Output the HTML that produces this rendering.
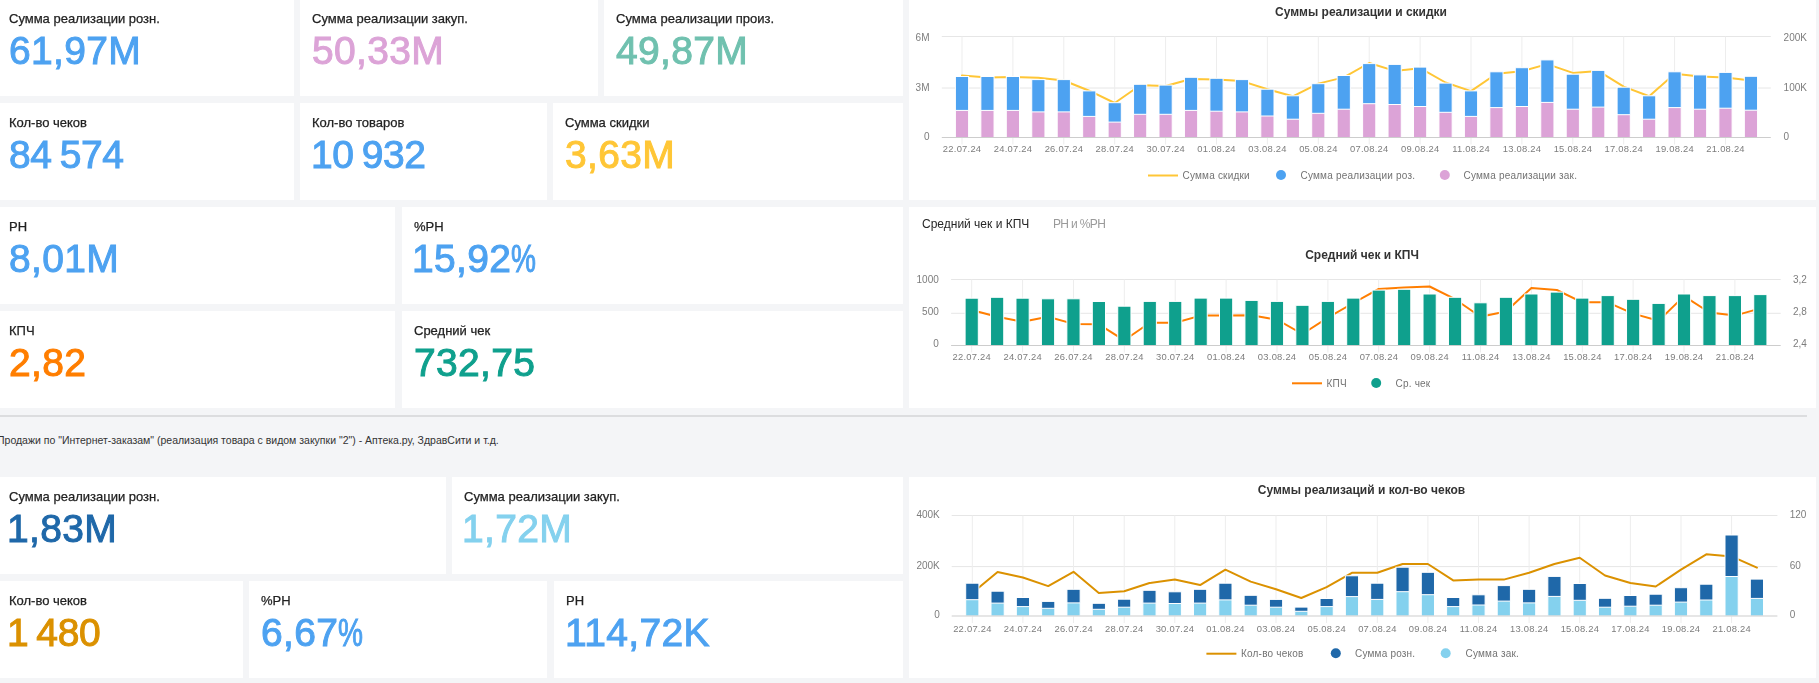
<!DOCTYPE html><html><head><meta charset="utf-8"><style>
html,body{margin:0;padding:0;}body{width:1819px;height:683px;overflow:hidden;background:#f4f5f7;position:relative;font-family:"Liberation Sans", sans-serif;}
.c{position:absolute;background:#fff;}
.l{position:absolute;font-size:13px;line-height:13px;color:#222;white-space:nowrap;-webkit-text-stroke:0.25px #222;will-change:transform;}
.v{position:absolute;font-size:39px;line-height:39px;white-space:nowrap;-webkit-text-stroke:1px currentColor;letter-spacing:0.35px;will-change:transform;}
.sep{position:absolute;left:0;top:415px;width:1807px;height:2px;background:#dcdddf;}
.note{position:absolute;left:-3px;top:433.5px;font-size:10.5px;line-height:12px;color:#333;white-space:nowrap;}
svg{position:absolute;left:0;top:0;will-change:transform;}
</style></head><body>
<div class="c" style="left:-3.5px;top:-1px;width:297.5px;height:97px"></div>
<div class="c" style="left:300px;top:-1px;width:298.4px;height:97px"></div>
<div class="c" style="left:603.7px;top:-1px;width:298.9px;height:97px"></div>
<div class="c" style="left:-3.5px;top:103px;width:297.5px;height:97px"></div>
<div class="c" style="left:300px;top:103px;width:247.0px;height:97px"></div>
<div class="c" style="left:553.4px;top:103px;width:349.2px;height:97px"></div>
<div class="c" style="left:-3.5px;top:207px;width:398.5px;height:97px"></div>
<div class="c" style="left:401.7px;top:207px;width:500.9px;height:97px"></div>
<div class="c" style="left:-3.5px;top:311px;width:398.5px;height:97px"></div>
<div class="c" style="left:401.7px;top:311px;width:500.9px;height:97px"></div>
<div class="c" style="left:-3.5px;top:477px;width:449.5px;height:97px"></div>
<div class="c" style="left:451.8px;top:477px;width:450.8px;height:97px"></div>
<div class="c" style="left:-3.5px;top:581px;width:246.7px;height:97px"></div>
<div class="c" style="left:249.3px;top:581px;width:298.0px;height:97px"></div>
<div class="c" style="left:554px;top:581px;width:348.6px;height:97px"></div>
<div class="c" style="left:908.7px;top:-1px;width:907.6px;height:201px"></div>
<div class="c" style="left:908.7px;top:207px;width:907.6px;height:201px"></div>
<div class="c" style="left:908.7px;top:477px;width:907.6px;height:201px"></div>
<div class="l" style="left:8.5px;top:11.8px">Сумма реализации розн.</div>
<div class="v" style="left:8.5px;top:31.2px;color:#4da2f1">61,97M</div>
<div class="l" style="left:312.0px;top:11.8px">Сумма реализации закуп.</div>
<div class="v" style="left:312.0px;top:31.2px;color:#dca3d7">50,33M</div>
<div class="l" style="left:615.7px;top:11.8px">Сумма реализации произ.</div>
<div class="v" style="left:615.7px;top:31.2px;color:#70c1af">49,87M</div>
<div class="l" style="left:8.5px;top:115.8px">Кол-во чеков</div>
<div class="v" style="left:8.5px;top:135.2px;color:#4da2f1;letter-spacing:-0.4px">84<span style='letter-spacing:-2.8px'> </span>574</div>
<div class="l" style="left:312.0px;top:115.8px">Кол-во товаров</div>
<div class="v" style="left:310.5px;top:135.2px;color:#4da2f1;letter-spacing:-0.4px">10<span style='letter-spacing:-2.8px'> </span>932</div>
<div class="l" style="left:565.4px;top:115.8px">Сумма скидки</div>
<div class="v" style="left:565.4px;top:135.2px;color:#ffc636">3,63M</div>
<div class="l" style="left:8.5px;top:219.8px">РН</div>
<div class="v" style="left:8.5px;top:239.2px;color:#4da2f1">8,01M</div>
<div class="l" style="left:413.7px;top:219.8px">%РН</div>
<div class="v" style="left:412.2px;top:239.2px;color:#4da2f1">15,92<span style='display:inline-block;transform:scaleX(0.72);transform-origin:0 0'>%</span></div>
<div class="l" style="left:8.5px;top:323.8px">КПЧ</div>
<div class="v" style="left:8.5px;top:343.2px;color:#ff7e00">2,82</div>
<div class="l" style="left:413.7px;top:323.8px">Средний чек</div>
<div class="v" style="left:413.7px;top:343.2px;color:#0fa08d">732,75</div>
<div class="l" style="left:8.5px;top:489.8px">Сумма реализации розн.</div>
<div class="v" style="left:7.0px;top:509.2px;color:#1f68a9">1,83M</div>
<div class="l" style="left:463.8px;top:489.8px">Сумма реализации закуп.</div>
<div class="v" style="left:462.3px;top:509.2px;color:#84d1ee">1,72M</div>
<div class="l" style="left:8.5px;top:593.8px">Кол-во чеков</div>
<div class="v" style="left:7.0px;top:613.2px;color:#db9100;letter-spacing:-0.4px">1<span style='letter-spacing:-2.8px'> </span>480</div>
<div class="l" style="left:261.3px;top:593.8px">%РН</div>
<div class="v" style="left:261.3px;top:613.2px;color:#4da2f1">6,67<span style='display:inline-block;transform:scaleX(0.72);transform-origin:0 0'>%</span></div>
<div class="l" style="left:566.0px;top:593.8px">РН</div>
<div class="v" style="left:564.5px;top:613.2px;color:#4da2f1">114,72K</div>
<div class="sep"></div>
<div class="note">Продажи по "Интернет-заказам" (реализация товара с видом закупки "2") - Аптека.ру, ЗдравСити и т.д.</div>
<svg width="1819" height="683" viewBox="0 0 1819 683" font-family='"Liberation Sans", sans-serif'>
<text x="1361.0" y="16.2" font-size="12" fill="#333333" text-anchor="middle" font-weight="700">Суммы реализации и скидки</text>
<line x1="941.8" y1="36.5" x2="1770.8" y2="36.5" stroke="#e6e6e6" stroke-width="1"/>
<line x1="941.8" y1="88" x2="1770.8" y2="88" stroke="#e6e6e6" stroke-width="1"/>
<line x1="962.0" y1="36.5" x2="962.0" y2="144.5" stroke="#ededed" stroke-width="1"/>
<text x="962.1" y="152.3" font-size="9.4" fill="#7d7d7d" text-anchor="middle" font-weight="400" letter-spacing="0.25">22.07.24</text>
<line x1="1012.9" y1="36.5" x2="1012.9" y2="144.5" stroke="#ededed" stroke-width="1"/>
<text x="1013.0" y="152.3" font-size="9.4" fill="#7d7d7d" text-anchor="middle" font-weight="400" letter-spacing="0.25">24.07.24</text>
<line x1="1063.8" y1="36.5" x2="1063.8" y2="144.5" stroke="#ededed" stroke-width="1"/>
<text x="1063.9" y="152.3" font-size="9.4" fill="#7d7d7d" text-anchor="middle" font-weight="400" letter-spacing="0.25">26.07.24</text>
<line x1="1114.7" y1="36.5" x2="1114.7" y2="144.5" stroke="#ededed" stroke-width="1"/>
<text x="1114.8" y="152.3" font-size="9.4" fill="#7d7d7d" text-anchor="middle" font-weight="400" letter-spacing="0.25">28.07.24</text>
<line x1="1165.6" y1="36.5" x2="1165.6" y2="144.5" stroke="#ededed" stroke-width="1"/>
<text x="1165.7" y="152.3" font-size="9.4" fill="#7d7d7d" text-anchor="middle" font-weight="400" letter-spacing="0.25">30.07.24</text>
<line x1="1216.5" y1="36.5" x2="1216.5" y2="144.5" stroke="#ededed" stroke-width="1"/>
<text x="1216.6" y="152.3" font-size="9.4" fill="#7d7d7d" text-anchor="middle" font-weight="400" letter-spacing="0.25">01.08.24</text>
<line x1="1267.4" y1="36.5" x2="1267.4" y2="144.5" stroke="#ededed" stroke-width="1"/>
<text x="1267.5" y="152.3" font-size="9.4" fill="#7d7d7d" text-anchor="middle" font-weight="400" letter-spacing="0.25">03.08.24</text>
<line x1="1318.3" y1="36.5" x2="1318.3" y2="144.5" stroke="#ededed" stroke-width="1"/>
<text x="1318.4" y="152.3" font-size="9.4" fill="#7d7d7d" text-anchor="middle" font-weight="400" letter-spacing="0.25">05.08.24</text>
<line x1="1369.2" y1="36.5" x2="1369.2" y2="144.5" stroke="#ededed" stroke-width="1"/>
<text x="1369.3" y="152.3" font-size="9.4" fill="#7d7d7d" text-anchor="middle" font-weight="400" letter-spacing="0.25">07.08.24</text>
<line x1="1420.1" y1="36.5" x2="1420.1" y2="144.5" stroke="#ededed" stroke-width="1"/>
<text x="1420.2" y="152.3" font-size="9.4" fill="#7d7d7d" text-anchor="middle" font-weight="400" letter-spacing="0.25">09.08.24</text>
<line x1="1471.0" y1="36.5" x2="1471.0" y2="144.5" stroke="#ededed" stroke-width="1"/>
<text x="1471.1" y="152.3" font-size="9.4" fill="#7d7d7d" text-anchor="middle" font-weight="400" letter-spacing="0.25">11.08.24</text>
<line x1="1521.9" y1="36.5" x2="1521.9" y2="144.5" stroke="#ededed" stroke-width="1"/>
<text x="1522.0" y="152.3" font-size="9.4" fill="#7d7d7d" text-anchor="middle" font-weight="400" letter-spacing="0.25">13.08.24</text>
<line x1="1572.8" y1="36.5" x2="1572.8" y2="144.5" stroke="#ededed" stroke-width="1"/>
<text x="1572.9" y="152.3" font-size="9.4" fill="#7d7d7d" text-anchor="middle" font-weight="400" letter-spacing="0.25">15.08.24</text>
<line x1="1623.7" y1="36.5" x2="1623.7" y2="144.5" stroke="#ededed" stroke-width="1"/>
<text x="1623.8" y="152.3" font-size="9.4" fill="#7d7d7d" text-anchor="middle" font-weight="400" letter-spacing="0.25">17.08.24</text>
<line x1="1674.6" y1="36.5" x2="1674.6" y2="144.5" stroke="#ededed" stroke-width="1"/>
<text x="1674.7" y="152.3" font-size="9.4" fill="#7d7d7d" text-anchor="middle" font-weight="400" letter-spacing="0.25">19.08.24</text>
<line x1="1725.5" y1="36.5" x2="1725.5" y2="144.5" stroke="#ededed" stroke-width="1"/>
<text x="1725.6" y="152.3" font-size="9.4" fill="#7d7d7d" text-anchor="middle" font-weight="400" letter-spacing="0.25">21.08.24</text>
<text x="929.5" y="40.6" font-size="10" fill="#7d7d7d" text-anchor="end" font-weight="400">6M</text>
<text x="929.5" y="90.9" font-size="10" fill="#7d7d7d" text-anchor="end" font-weight="400">3M</text>
<text x="929.5" y="139.6" font-size="10" fill="#7d7d7d" text-anchor="end" font-weight="400">0</text>
<text x="1783.6" y="40.6" font-size="10" fill="#7d7d7d" text-anchor="start" font-weight="400">200K</text>
<text x="1783.6" y="90.9" font-size="10" fill="#7d7d7d" text-anchor="start" font-weight="400">100K</text>
<text x="1783.6" y="139.6" font-size="10" fill="#7d7d7d" text-anchor="start" font-weight="400">0</text>
<polyline points="962.0,75.4 987.5,77.4 1012.9,77.0 1038.3,77.8 1063.8,80.5 1089.2,90.7 1114.7,103.0 1140.2,85.2 1165.6,86.0 1191.0,79.0 1216.5,79.5 1242.0,81.1 1267.4,89.3 1292.8,96.3 1318.3,83.6 1343.8,77.4 1369.2,63.0 1394.7,70.9 1420.1,68.2 1445.5,82.5 1471.0,91.1 1496.4,73.7 1521.9,71.3 1547.3,64.1 1572.8,72.9 1598.2,70.9 1623.7,86.6 1649.2,96.3 1674.6,73.7 1700.0,76.4 1725.5,77.4 1750.9,80.5" fill="none" stroke="#ffc636" stroke-width="2" stroke-linejoin="round" stroke-linecap="round"/>
<rect x="955.40" y="109.90" width="13.20" height="27.60" fill="#dca3d7" stroke="#fff" stroke-width="1"/>
<rect x="955.40" y="76.50" width="13.20" height="33.90" fill="#4da2f1" stroke="#fff" stroke-width="1"/>
<rect x="980.85" y="109.90" width="13.20" height="27.60" fill="#dca3d7" stroke="#fff" stroke-width="1"/>
<rect x="980.85" y="76.50" width="13.20" height="33.90" fill="#4da2f1" stroke="#fff" stroke-width="1"/>
<rect x="1006.30" y="109.90" width="13.20" height="27.60" fill="#dca3d7" stroke="#fff" stroke-width="1"/>
<rect x="1006.30" y="76.50" width="13.20" height="33.90" fill="#4da2f1" stroke="#fff" stroke-width="1"/>
<rect x="1031.75" y="111.40" width="13.20" height="26.10" fill="#dca3d7" stroke="#fff" stroke-width="1"/>
<rect x="1031.75" y="79.60" width="13.20" height="32.30" fill="#4da2f1" stroke="#fff" stroke-width="1"/>
<rect x="1057.20" y="111.40" width="13.20" height="26.10" fill="#dca3d7" stroke="#fff" stroke-width="1"/>
<rect x="1057.20" y="79.60" width="13.20" height="32.30" fill="#4da2f1" stroke="#fff" stroke-width="1"/>
<rect x="1082.65" y="115.90" width="13.20" height="21.60" fill="#dca3d7" stroke="#fff" stroke-width="1"/>
<rect x="1082.65" y="90.90" width="13.20" height="25.50" fill="#4da2f1" stroke="#fff" stroke-width="1"/>
<rect x="1108.10" y="121.60" width="13.20" height="15.90" fill="#dca3d7" stroke="#fff" stroke-width="1"/>
<rect x="1108.10" y="102.70" width="13.20" height="19.40" fill="#4da2f1" stroke="#fff" stroke-width="1"/>
<rect x="1133.55" y="113.80" width="13.20" height="23.70" fill="#dca3d7" stroke="#fff" stroke-width="1"/>
<rect x="1133.55" y="84.30" width="13.20" height="30.00" fill="#4da2f1" stroke="#fff" stroke-width="1"/>
<rect x="1159.00" y="113.80" width="13.20" height="23.70" fill="#dca3d7" stroke="#fff" stroke-width="1"/>
<rect x="1159.00" y="85.10" width="13.20" height="29.20" fill="#4da2f1" stroke="#fff" stroke-width="1"/>
<rect x="1184.45" y="109.90" width="13.20" height="27.60" fill="#dca3d7" stroke="#fff" stroke-width="1"/>
<rect x="1184.45" y="77.30" width="13.20" height="33.10" fill="#4da2f1" stroke="#fff" stroke-width="1"/>
<rect x="1209.90" y="110.70" width="13.20" height="26.80" fill="#dca3d7" stroke="#fff" stroke-width="1"/>
<rect x="1209.90" y="78.30" width="13.20" height="32.90" fill="#4da2f1" stroke="#fff" stroke-width="1"/>
<rect x="1235.35" y="111.40" width="13.20" height="26.10" fill="#dca3d7" stroke="#fff" stroke-width="1"/>
<rect x="1235.35" y="79.60" width="13.20" height="32.30" fill="#4da2f1" stroke="#fff" stroke-width="1"/>
<rect x="1260.80" y="115.50" width="13.20" height="22.00" fill="#dca3d7" stroke="#fff" stroke-width="1"/>
<rect x="1260.80" y="89.20" width="13.20" height="26.80" fill="#4da2f1" stroke="#fff" stroke-width="1"/>
<rect x="1286.25" y="118.70" width="13.20" height="18.80" fill="#dca3d7" stroke="#fff" stroke-width="1"/>
<rect x="1286.25" y="95.80" width="13.20" height="23.40" fill="#4da2f1" stroke="#fff" stroke-width="1"/>
<rect x="1311.70" y="112.80" width="13.20" height="24.70" fill="#dca3d7" stroke="#fff" stroke-width="1"/>
<rect x="1311.70" y="83.70" width="13.20" height="29.60" fill="#4da2f1" stroke="#fff" stroke-width="1"/>
<rect x="1337.15" y="108.70" width="13.20" height="28.80" fill="#dca3d7" stroke="#fff" stroke-width="1"/>
<rect x="1337.15" y="75.50" width="13.20" height="33.70" fill="#4da2f1" stroke="#fff" stroke-width="1"/>
<rect x="1362.60" y="103.20" width="13.20" height="34.30" fill="#dca3d7" stroke="#fff" stroke-width="1"/>
<rect x="1362.60" y="63.60" width="13.20" height="40.10" fill="#4da2f1" stroke="#fff" stroke-width="1"/>
<rect x="1388.05" y="104.00" width="13.20" height="33.50" fill="#dca3d7" stroke="#fff" stroke-width="1"/>
<rect x="1388.05" y="64.40" width="13.20" height="40.10" fill="#4da2f1" stroke="#fff" stroke-width="1"/>
<rect x="1413.50" y="106.00" width="13.20" height="31.50" fill="#dca3d7" stroke="#fff" stroke-width="1"/>
<rect x="1413.50" y="67.10" width="13.20" height="39.40" fill="#4da2f1" stroke="#fff" stroke-width="1"/>
<rect x="1438.95" y="111.80" width="13.20" height="25.70" fill="#dca3d7" stroke="#fff" stroke-width="1"/>
<rect x="1438.95" y="83.10" width="13.20" height="29.20" fill="#4da2f1" stroke="#fff" stroke-width="1"/>
<rect x="1464.40" y="115.90" width="13.20" height="21.60" fill="#dca3d7" stroke="#fff" stroke-width="1"/>
<rect x="1464.40" y="90.90" width="13.20" height="25.50" fill="#4da2f1" stroke="#fff" stroke-width="1"/>
<rect x="1489.85" y="107.10" width="13.20" height="30.40" fill="#dca3d7" stroke="#fff" stroke-width="1"/>
<rect x="1489.85" y="71.80" width="13.20" height="35.80" fill="#4da2f1" stroke="#fff" stroke-width="1"/>
<rect x="1515.30" y="106.00" width="13.20" height="31.50" fill="#dca3d7" stroke="#fff" stroke-width="1"/>
<rect x="1515.30" y="67.70" width="13.20" height="38.80" fill="#4da2f1" stroke="#fff" stroke-width="1"/>
<rect x="1540.75" y="101.90" width="13.20" height="35.60" fill="#dca3d7" stroke="#fff" stroke-width="1"/>
<rect x="1540.75" y="59.90" width="13.20" height="42.50" fill="#4da2f1" stroke="#fff" stroke-width="1"/>
<rect x="1566.20" y="108.70" width="13.20" height="28.80" fill="#dca3d7" stroke="#fff" stroke-width="1"/>
<rect x="1566.20" y="74.20" width="13.20" height="35.00" fill="#4da2f1" stroke="#fff" stroke-width="1"/>
<rect x="1591.65" y="106.60" width="13.20" height="30.90" fill="#dca3d7" stroke="#fff" stroke-width="1"/>
<rect x="1591.65" y="70.40" width="13.20" height="36.70" fill="#4da2f1" stroke="#fff" stroke-width="1"/>
<rect x="1617.10" y="114.20" width="13.20" height="23.30" fill="#dca3d7" stroke="#fff" stroke-width="1"/>
<rect x="1617.10" y="87.20" width="13.20" height="27.50" fill="#4da2f1" stroke="#fff" stroke-width="1"/>
<rect x="1642.55" y="118.70" width="13.20" height="18.80" fill="#dca3d7" stroke="#fff" stroke-width="1"/>
<rect x="1642.55" y="95.80" width="13.20" height="23.40" fill="#4da2f1" stroke="#fff" stroke-width="1"/>
<rect x="1668.00" y="107.10" width="13.20" height="30.40" fill="#dca3d7" stroke="#fff" stroke-width="1"/>
<rect x="1668.00" y="71.80" width="13.20" height="35.80" fill="#4da2f1" stroke="#fff" stroke-width="1"/>
<rect x="1693.45" y="108.70" width="13.20" height="28.80" fill="#dca3d7" stroke="#fff" stroke-width="1"/>
<rect x="1693.45" y="74.90" width="13.20" height="34.30" fill="#4da2f1" stroke="#fff" stroke-width="1"/>
<rect x="1718.90" y="107.70" width="13.20" height="29.80" fill="#dca3d7" stroke="#fff" stroke-width="1"/>
<rect x="1718.90" y="72.40" width="13.20" height="35.80" fill="#4da2f1" stroke="#fff" stroke-width="1"/>
<rect x="1744.35" y="109.70" width="13.20" height="27.80" fill="#dca3d7" stroke="#fff" stroke-width="1"/>
<rect x="1744.35" y="76.30" width="13.20" height="33.90" fill="#4da2f1" stroke="#fff" stroke-width="1"/>
<line x1="941.8" y1="137.5" x2="1770.8" y2="137.5" stroke="#cdcdcd" stroke-width="1"/>
<line x1="1148" y1="175.5" x2="1178" y2="175.5" stroke="#ffc636" stroke-width="2"/>
<text x="1182.5" y="179.0" font-size="10" fill="#737373" text-anchor="start" font-weight="400" letter-spacing="0.2">Сумма скидки</text>
<circle cx="1281" cy="175" r="5" fill="#4da2f1"/>
<text x="1300.5" y="179.0" font-size="10" fill="#737373" text-anchor="start" font-weight="400" letter-spacing="0.2">Сумма реализации роз.</text>
<circle cx="1444.8" cy="175" r="5" fill="#dca3d7"/>
<text x="1463.5" y="179.0" font-size="10" fill="#737373" text-anchor="start" font-weight="400" letter-spacing="0.2">Сумма реализации зак.</text>
<text x="922.0" y="228.2" font-size="12" fill="#262626" text-anchor="start" font-weight="400">Средний чек и КПЧ</text>
<text x="1053" y="228.2" font-size="12" fill="#9a9a9a" letter-spacing="-0.65">РН и %РН</text>
<text x="1362.0" y="259.4" font-size="12" fill="#333333" text-anchor="middle" font-weight="700">Средний чек и КПЧ</text>
<line x1="951.1" y1="279.5" x2="1780.7" y2="279.5" stroke="#e6e6e6" stroke-width="1"/>
<line x1="951.1" y1="313.3" x2="1780.7" y2="313.3" stroke="#e6e6e6" stroke-width="1"/>
<line x1="971.7" y1="279.5" x2="971.7" y2="352.5" stroke="#ededed" stroke-width="1"/>
<text x="971.8" y="360.0" font-size="9.4" fill="#7d7d7d" text-anchor="middle" font-weight="400" letter-spacing="0.25">22.07.24</text>
<line x1="1022.6" y1="279.5" x2="1022.6" y2="352.5" stroke="#ededed" stroke-width="1"/>
<text x="1022.7" y="360.0" font-size="9.4" fill="#7d7d7d" text-anchor="middle" font-weight="400" letter-spacing="0.25">24.07.24</text>
<line x1="1073.5" y1="279.5" x2="1073.5" y2="352.5" stroke="#ededed" stroke-width="1"/>
<text x="1073.6" y="360.0" font-size="9.4" fill="#7d7d7d" text-anchor="middle" font-weight="400" letter-spacing="0.25">26.07.24</text>
<line x1="1124.3" y1="279.5" x2="1124.3" y2="352.5" stroke="#ededed" stroke-width="1"/>
<text x="1124.5" y="360.0" font-size="9.4" fill="#7d7d7d" text-anchor="middle" font-weight="400" letter-spacing="0.25">28.07.24</text>
<line x1="1175.2" y1="279.5" x2="1175.2" y2="352.5" stroke="#ededed" stroke-width="1"/>
<text x="1175.3" y="360.0" font-size="9.4" fill="#7d7d7d" text-anchor="middle" font-weight="400" letter-spacing="0.25">30.07.24</text>
<line x1="1226.1" y1="279.5" x2="1226.1" y2="352.5" stroke="#ededed" stroke-width="1"/>
<text x="1226.2" y="360.0" font-size="9.4" fill="#7d7d7d" text-anchor="middle" font-weight="400" letter-spacing="0.25">01.08.24</text>
<line x1="1277.0" y1="279.5" x2="1277.0" y2="352.5" stroke="#ededed" stroke-width="1"/>
<text x="1277.1" y="360.0" font-size="9.4" fill="#7d7d7d" text-anchor="middle" font-weight="400" letter-spacing="0.25">03.08.24</text>
<line x1="1327.9" y1="279.5" x2="1327.9" y2="352.5" stroke="#ededed" stroke-width="1"/>
<text x="1328.0" y="360.0" font-size="9.4" fill="#7d7d7d" text-anchor="middle" font-weight="400" letter-spacing="0.25">05.08.24</text>
<line x1="1378.7" y1="279.5" x2="1378.7" y2="352.5" stroke="#ededed" stroke-width="1"/>
<text x="1378.9" y="360.0" font-size="9.4" fill="#7d7d7d" text-anchor="middle" font-weight="400" letter-spacing="0.25">07.08.24</text>
<line x1="1429.6" y1="279.5" x2="1429.6" y2="352.5" stroke="#ededed" stroke-width="1"/>
<text x="1429.7" y="360.0" font-size="9.4" fill="#7d7d7d" text-anchor="middle" font-weight="400" letter-spacing="0.25">09.08.24</text>
<line x1="1480.5" y1="279.5" x2="1480.5" y2="352.5" stroke="#ededed" stroke-width="1"/>
<text x="1480.6" y="360.0" font-size="9.4" fill="#7d7d7d" text-anchor="middle" font-weight="400" letter-spacing="0.25">11.08.24</text>
<line x1="1531.4" y1="279.5" x2="1531.4" y2="352.5" stroke="#ededed" stroke-width="1"/>
<text x="1531.5" y="360.0" font-size="9.4" fill="#7d7d7d" text-anchor="middle" font-weight="400" letter-spacing="0.25">13.08.24</text>
<line x1="1582.3" y1="279.5" x2="1582.3" y2="352.5" stroke="#ededed" stroke-width="1"/>
<text x="1582.4" y="360.0" font-size="9.4" fill="#7d7d7d" text-anchor="middle" font-weight="400" letter-spacing="0.25">15.08.24</text>
<line x1="1633.1" y1="279.5" x2="1633.1" y2="352.5" stroke="#ededed" stroke-width="1"/>
<text x="1633.3" y="360.0" font-size="9.4" fill="#7d7d7d" text-anchor="middle" font-weight="400" letter-spacing="0.25">17.08.24</text>
<line x1="1684.0" y1="279.5" x2="1684.0" y2="352.5" stroke="#ededed" stroke-width="1"/>
<text x="1684.1" y="360.0" font-size="9.4" fill="#7d7d7d" text-anchor="middle" font-weight="400" letter-spacing="0.25">19.08.24</text>
<line x1="1734.9" y1="279.5" x2="1734.9" y2="352.5" stroke="#ededed" stroke-width="1"/>
<text x="1735.0" y="360.0" font-size="9.4" fill="#7d7d7d" text-anchor="middle" font-weight="400" letter-spacing="0.25">21.08.24</text>
<text x="938.8" y="283.0" font-size="10" fill="#7d7d7d" text-anchor="end" font-weight="400">1000</text>
<text x="938.8" y="315.2" font-size="10" fill="#7d7d7d" text-anchor="end" font-weight="400">500</text>
<text x="938.8" y="347.0" font-size="10" fill="#7d7d7d" text-anchor="end" font-weight="400">0</text>
<text x="1793.0" y="283.0" font-size="10" fill="#7d7d7d" text-anchor="start" font-weight="400">3,2</text>
<text x="1793.0" y="315.2" font-size="10" fill="#7d7d7d" text-anchor="start" font-weight="400">2,8</text>
<text x="1793.0" y="347.0" font-size="10" fill="#7d7d7d" text-anchor="start" font-weight="400">2,4</text>
<polyline points="971.7,310.0 997.1,316.7 1022.6,321.8 1048.0,316.7 1073.5,323.9 1098.9,324.3 1124.3,340.3 1149.8,322.8 1175.2,322.8 1200.7,315.6 1226.1,315.6 1251.5,315.2 1277.0,319.7 1302.4,334.0 1327.9,317.7 1353.3,303.0 1378.7,289.0 1404.2,287.5 1429.6,286.5 1455.1,299.2 1480.5,316.8 1505.9,311.5 1531.4,288.0 1556.8,290.0 1582.3,302.3 1607.7,302.3 1633.1,313.6 1658.6,320.7 1684.0,296.1 1709.5,312.5 1734.9,315.6 1760.3,308.4" fill="none" stroke="#ff7e00" stroke-width="2" stroke-linejoin="round" stroke-linecap="round"/>
<rect x="965.10" y="298.20" width="13.20" height="47.30" fill="#0fa08d" stroke="#fff" stroke-width="1"/>
<rect x="990.54" y="297.30" width="13.20" height="48.20" fill="#0fa08d" stroke="#fff" stroke-width="1"/>
<rect x="1015.98" y="298.20" width="13.20" height="47.30" fill="#0fa08d" stroke="#fff" stroke-width="1"/>
<rect x="1041.42" y="298.80" width="13.20" height="46.70" fill="#0fa08d" stroke="#fff" stroke-width="1"/>
<rect x="1066.86" y="298.80" width="13.20" height="46.70" fill="#0fa08d" stroke="#fff" stroke-width="1"/>
<rect x="1092.30" y="301.50" width="13.20" height="44.00" fill="#0fa08d" stroke="#fff" stroke-width="1"/>
<rect x="1117.74" y="306.20" width="13.20" height="39.30" fill="#0fa08d" stroke="#fff" stroke-width="1"/>
<rect x="1143.18" y="301.40" width="13.20" height="44.10" fill="#0fa08d" stroke="#fff" stroke-width="1"/>
<rect x="1168.62" y="301.40" width="13.20" height="44.10" fill="#0fa08d" stroke="#fff" stroke-width="1"/>
<rect x="1194.06" y="298.10" width="13.20" height="47.40" fill="#0fa08d" stroke="#fff" stroke-width="1"/>
<rect x="1219.50" y="298.10" width="13.20" height="47.40" fill="#0fa08d" stroke="#fff" stroke-width="1"/>
<rect x="1244.94" y="300.40" width="13.20" height="45.10" fill="#0fa08d" stroke="#fff" stroke-width="1"/>
<rect x="1270.38" y="301.40" width="13.20" height="44.10" fill="#0fa08d" stroke="#fff" stroke-width="1"/>
<rect x="1295.82" y="305.30" width="13.20" height="40.20" fill="#0fa08d" stroke="#fff" stroke-width="1"/>
<rect x="1321.26" y="301.40" width="13.20" height="44.10" fill="#0fa08d" stroke="#fff" stroke-width="1"/>
<rect x="1346.70" y="298.10" width="13.20" height="47.40" fill="#0fa08d" stroke="#fff" stroke-width="1"/>
<rect x="1372.14" y="290.10" width="13.20" height="55.40" fill="#0fa08d" stroke="#fff" stroke-width="1"/>
<rect x="1397.58" y="289.30" width="13.20" height="56.20" fill="#0fa08d" stroke="#fff" stroke-width="1"/>
<rect x="1423.02" y="294.00" width="13.20" height="51.50" fill="#0fa08d" stroke="#fff" stroke-width="1"/>
<rect x="1448.46" y="297.30" width="13.20" height="48.20" fill="#0fa08d" stroke="#fff" stroke-width="1"/>
<rect x="1473.90" y="302.80" width="13.20" height="42.70" fill="#0fa08d" stroke="#fff" stroke-width="1"/>
<rect x="1499.34" y="297.30" width="13.20" height="48.20" fill="#0fa08d" stroke="#fff" stroke-width="1"/>
<rect x="1524.78" y="294.00" width="13.20" height="51.50" fill="#0fa08d" stroke="#fff" stroke-width="1"/>
<rect x="1550.22" y="292.10" width="13.20" height="53.40" fill="#0fa08d" stroke="#fff" stroke-width="1"/>
<rect x="1575.66" y="298.10" width="13.20" height="47.40" fill="#0fa08d" stroke="#fff" stroke-width="1"/>
<rect x="1601.10" y="295.60" width="13.20" height="49.90" fill="#0fa08d" stroke="#fff" stroke-width="1"/>
<rect x="1626.54" y="299.30" width="13.20" height="46.20" fill="#0fa08d" stroke="#fff" stroke-width="1"/>
<rect x="1651.98" y="303.40" width="13.20" height="42.10" fill="#0fa08d" stroke="#fff" stroke-width="1"/>
<rect x="1677.42" y="294.00" width="13.20" height="51.50" fill="#0fa08d" stroke="#fff" stroke-width="1"/>
<rect x="1702.86" y="295.60" width="13.20" height="49.90" fill="#0fa08d" stroke="#fff" stroke-width="1"/>
<rect x="1728.30" y="295.60" width="13.20" height="49.90" fill="#0fa08d" stroke="#fff" stroke-width="1"/>
<rect x="1753.74" y="294.60" width="13.20" height="50.90" fill="#0fa08d" stroke="#fff" stroke-width="1"/>
<line x1="951.1" y1="345.5" x2="1780.7" y2="345.5" stroke="#cdcdcd" stroke-width="1"/>
<line x1="1292" y1="383.3" x2="1322" y2="383.3" stroke="#ff7e00" stroke-width="2"/>
<text x="1326.5" y="386.8" font-size="10" fill="#737373" text-anchor="start" font-weight="400" letter-spacing="0.2">КПЧ</text>
<circle cx="1376.2" cy="383" r="5" fill="#0fa08d"/>
<text x="1395.5" y="386.8" font-size="10" fill="#737373" text-anchor="start" font-weight="400" letter-spacing="0.2">Ср. чек</text>
<text x="1361.5" y="494.3" font-size="12" fill="#333333" text-anchor="middle" font-weight="700">Суммы реализаций и кол-во чеков</text>
<line x1="951.7" y1="515.5" x2="1777.4" y2="515.5" stroke="#e6e6e6" stroke-width="1"/>
<line x1="951.7" y1="566.6" x2="1777.4" y2="566.6" stroke="#e6e6e6" stroke-width="1"/>
<line x1="972.3" y1="515.5" x2="972.3" y2="623" stroke="#ededed" stroke-width="1"/>
<text x="972.4" y="631.5" font-size="9.4" fill="#7d7d7d" text-anchor="middle" font-weight="400" letter-spacing="0.25">22.07.24</text>
<line x1="1022.9" y1="515.5" x2="1022.9" y2="623" stroke="#ededed" stroke-width="1"/>
<text x="1023.0" y="631.5" font-size="9.4" fill="#7d7d7d" text-anchor="middle" font-weight="400" letter-spacing="0.25">24.07.24</text>
<line x1="1073.5" y1="515.5" x2="1073.5" y2="623" stroke="#ededed" stroke-width="1"/>
<text x="1073.7" y="631.5" font-size="9.4" fill="#7d7d7d" text-anchor="middle" font-weight="400" letter-spacing="0.25">26.07.24</text>
<line x1="1124.2" y1="515.5" x2="1124.2" y2="623" stroke="#ededed" stroke-width="1"/>
<text x="1124.3" y="631.5" font-size="9.4" fill="#7d7d7d" text-anchor="middle" font-weight="400" letter-spacing="0.25">28.07.24</text>
<line x1="1174.8" y1="515.5" x2="1174.8" y2="623" stroke="#ededed" stroke-width="1"/>
<text x="1174.9" y="631.5" font-size="9.4" fill="#7d7d7d" text-anchor="middle" font-weight="400" letter-spacing="0.25">30.07.24</text>
<line x1="1225.4" y1="515.5" x2="1225.4" y2="623" stroke="#ededed" stroke-width="1"/>
<text x="1225.5" y="631.5" font-size="9.4" fill="#7d7d7d" text-anchor="middle" font-weight="400" letter-spacing="0.25">01.08.24</text>
<line x1="1276.0" y1="515.5" x2="1276.0" y2="623" stroke="#ededed" stroke-width="1"/>
<text x="1276.1" y="631.5" font-size="9.4" fill="#7d7d7d" text-anchor="middle" font-weight="400" letter-spacing="0.25">03.08.24</text>
<line x1="1326.6" y1="515.5" x2="1326.6" y2="623" stroke="#ededed" stroke-width="1"/>
<text x="1326.8" y="631.5" font-size="9.4" fill="#7d7d7d" text-anchor="middle" font-weight="400" letter-spacing="0.25">05.08.24</text>
<line x1="1377.3" y1="515.5" x2="1377.3" y2="623" stroke="#ededed" stroke-width="1"/>
<text x="1377.4" y="631.5" font-size="9.4" fill="#7d7d7d" text-anchor="middle" font-weight="400" letter-spacing="0.25">07.08.24</text>
<line x1="1427.9" y1="515.5" x2="1427.9" y2="623" stroke="#ededed" stroke-width="1"/>
<text x="1428.0" y="631.5" font-size="9.4" fill="#7d7d7d" text-anchor="middle" font-weight="400" letter-spacing="0.25">09.08.24</text>
<line x1="1478.5" y1="515.5" x2="1478.5" y2="623" stroke="#ededed" stroke-width="1"/>
<text x="1478.6" y="631.5" font-size="9.4" fill="#7d7d7d" text-anchor="middle" font-weight="400" letter-spacing="0.25">11.08.24</text>
<line x1="1529.1" y1="515.5" x2="1529.1" y2="623" stroke="#ededed" stroke-width="1"/>
<text x="1529.2" y="631.5" font-size="9.4" fill="#7d7d7d" text-anchor="middle" font-weight="400" letter-spacing="0.25">13.08.24</text>
<line x1="1579.7" y1="515.5" x2="1579.7" y2="623" stroke="#ededed" stroke-width="1"/>
<text x="1579.9" y="631.5" font-size="9.4" fill="#7d7d7d" text-anchor="middle" font-weight="400" letter-spacing="0.25">15.08.24</text>
<line x1="1630.4" y1="515.5" x2="1630.4" y2="623" stroke="#ededed" stroke-width="1"/>
<text x="1630.5" y="631.5" font-size="9.4" fill="#7d7d7d" text-anchor="middle" font-weight="400" letter-spacing="0.25">17.08.24</text>
<line x1="1681.0" y1="515.5" x2="1681.0" y2="623" stroke="#ededed" stroke-width="1"/>
<text x="1681.1" y="631.5" font-size="9.4" fill="#7d7d7d" text-anchor="middle" font-weight="400" letter-spacing="0.25">19.08.24</text>
<line x1="1731.6" y1="515.5" x2="1731.6" y2="623" stroke="#ededed" stroke-width="1"/>
<text x="1731.7" y="631.5" font-size="9.4" fill="#7d7d7d" text-anchor="middle" font-weight="400" letter-spacing="0.25">21.08.24</text>
<text x="939.8" y="517.8" font-size="10" fill="#7d7d7d" text-anchor="end" font-weight="400">400K</text>
<text x="939.8" y="568.5" font-size="10" fill="#7d7d7d" text-anchor="end" font-weight="400">200K</text>
<text x="939.8" y="618.3" font-size="10" fill="#7d7d7d" text-anchor="end" font-weight="400">0</text>
<text x="1789.7" y="517.8" font-size="10" fill="#7d7d7d" text-anchor="start" font-weight="400">120</text>
<text x="1789.7" y="568.5" font-size="10" fill="#7d7d7d" text-anchor="start" font-weight="400">60</text>
<text x="1789.7" y="618.3" font-size="10" fill="#7d7d7d" text-anchor="start" font-weight="400">0</text>
<polyline points="972.3,593.0 997.6,572.0 1022.9,577.5 1048.2,586.1 1073.5,571.8 1098.8,592.9 1124.2,591.2 1149.5,583.0 1174.8,579.6 1200.1,585.1 1225.4,569.7 1250.7,581.6 1276.0,589.2 1301.3,598.0 1326.6,587.1 1351.9,572.8 1377.3,572.8 1402.6,564.0 1427.9,564.0 1453.2,580.4 1478.5,579.6 1503.8,579.6 1529.1,572.8 1554.4,564.0 1579.7,557.8 1605.0,575.5 1630.4,583.0 1655.7,586.5 1681.0,569.7 1706.3,554.3 1731.6,556.4 1756.9,567.7" fill="none" stroke="#db9100" stroke-width="2" stroke-linejoin="round" stroke-linecap="round"/>
<rect x="965.70" y="599.20" width="13.20" height="16.80" fill="#84d1ee" stroke="#fff" stroke-width="1"/>
<rect x="965.70" y="583.20" width="13.20" height="16.50" fill="#1f68a9" stroke="#fff" stroke-width="1"/>
<rect x="991.01" y="602.60" width="13.20" height="13.40" fill="#84d1ee" stroke="#fff" stroke-width="1"/>
<rect x="991.01" y="591.20" width="13.20" height="11.90" fill="#1f68a9" stroke="#fff" stroke-width="1"/>
<rect x="1016.32" y="606.10" width="13.20" height="9.90" fill="#84d1ee" stroke="#fff" stroke-width="1"/>
<rect x="1016.32" y="597.50" width="13.20" height="9.10" fill="#1f68a9" stroke="#fff" stroke-width="1"/>
<rect x="1041.63" y="607.80" width="13.20" height="8.20" fill="#84d1ee" stroke="#fff" stroke-width="1"/>
<rect x="1041.63" y="601.40" width="13.20" height="6.90" fill="#1f68a9" stroke="#fff" stroke-width="1"/>
<rect x="1066.94" y="602.40" width="13.20" height="13.60" fill="#84d1ee" stroke="#fff" stroke-width="1"/>
<rect x="1066.94" y="589.30" width="13.20" height="13.60" fill="#1f68a9" stroke="#fff" stroke-width="1"/>
<rect x="1092.25" y="608.80" width="13.20" height="7.20" fill="#84d1ee" stroke="#fff" stroke-width="1"/>
<rect x="1092.25" y="603.30" width="13.20" height="6.00" fill="#1f68a9" stroke="#fff" stroke-width="1"/>
<rect x="1117.56" y="606.70" width="13.20" height="9.30" fill="#84d1ee" stroke="#fff" stroke-width="1"/>
<rect x="1117.56" y="599.20" width="13.20" height="8.00" fill="#1f68a9" stroke="#fff" stroke-width="1"/>
<rect x="1142.87" y="602.60" width="13.20" height="13.40" fill="#84d1ee" stroke="#fff" stroke-width="1"/>
<rect x="1142.87" y="590.30" width="13.20" height="12.80" fill="#1f68a9" stroke="#fff" stroke-width="1"/>
<rect x="1168.18" y="603.00" width="13.20" height="13.00" fill="#84d1ee" stroke="#fff" stroke-width="1"/>
<rect x="1168.18" y="591.80" width="13.20" height="11.70" fill="#1f68a9" stroke="#fff" stroke-width="1"/>
<rect x="1193.49" y="602.60" width="13.20" height="13.40" fill="#84d1ee" stroke="#fff" stroke-width="1"/>
<rect x="1193.49" y="589.30" width="13.20" height="13.80" fill="#1f68a9" stroke="#fff" stroke-width="1"/>
<rect x="1218.80" y="599.40" width="13.20" height="16.60" fill="#84d1ee" stroke="#fff" stroke-width="1"/>
<rect x="1218.80" y="583.20" width="13.20" height="16.70" fill="#1f68a9" stroke="#fff" stroke-width="1"/>
<rect x="1244.11" y="604.70" width="13.20" height="11.30" fill="#84d1ee" stroke="#fff" stroke-width="1"/>
<rect x="1244.11" y="595.30" width="13.20" height="9.90" fill="#1f68a9" stroke="#fff" stroke-width="1"/>
<rect x="1269.42" y="606.70" width="13.20" height="9.30" fill="#84d1ee" stroke="#fff" stroke-width="1"/>
<rect x="1269.42" y="599.40" width="13.20" height="7.80" fill="#1f68a9" stroke="#fff" stroke-width="1"/>
<rect x="1294.73" y="610.80" width="13.20" height="5.20" fill="#84d1ee" stroke="#fff" stroke-width="1"/>
<rect x="1294.73" y="607.10" width="13.20" height="4.20" fill="#1f68a9" stroke="#fff" stroke-width="1"/>
<rect x="1320.04" y="606.10" width="13.20" height="9.90" fill="#84d1ee" stroke="#fff" stroke-width="1"/>
<rect x="1320.04" y="598.50" width="13.20" height="8.10" fill="#1f68a9" stroke="#fff" stroke-width="1"/>
<rect x="1345.35" y="596.10" width="13.20" height="19.90" fill="#84d1ee" stroke="#fff" stroke-width="1"/>
<rect x="1345.35" y="575.80" width="13.20" height="20.80" fill="#1f68a9" stroke="#fff" stroke-width="1"/>
<rect x="1370.66" y="598.90" width="13.20" height="17.10" fill="#84d1ee" stroke="#fff" stroke-width="1"/>
<rect x="1370.66" y="583.20" width="13.20" height="16.20" fill="#1f68a9" stroke="#fff" stroke-width="1"/>
<rect x="1395.97" y="591.20" width="13.20" height="24.80" fill="#84d1ee" stroke="#fff" stroke-width="1"/>
<rect x="1395.97" y="567.20" width="13.20" height="24.50" fill="#1f68a9" stroke="#fff" stroke-width="1"/>
<rect x="1421.28" y="594.20" width="13.20" height="21.80" fill="#84d1ee" stroke="#fff" stroke-width="1"/>
<rect x="1421.28" y="572.30" width="13.20" height="22.40" fill="#1f68a9" stroke="#fff" stroke-width="1"/>
<rect x="1446.59" y="606.10" width="13.20" height="9.90" fill="#84d1ee" stroke="#fff" stroke-width="1"/>
<rect x="1446.59" y="597.50" width="13.20" height="9.10" fill="#1f68a9" stroke="#fff" stroke-width="1"/>
<rect x="1471.90" y="604.50" width="13.20" height="11.50" fill="#84d1ee" stroke="#fff" stroke-width="1"/>
<rect x="1471.90" y="594.80" width="13.20" height="10.20" fill="#1f68a9" stroke="#fff" stroke-width="1"/>
<rect x="1497.21" y="600.60" width="13.20" height="15.40" fill="#84d1ee" stroke="#fff" stroke-width="1"/>
<rect x="1497.21" y="585.60" width="13.20" height="15.50" fill="#1f68a9" stroke="#fff" stroke-width="1"/>
<rect x="1522.52" y="602.40" width="13.20" height="13.60" fill="#84d1ee" stroke="#fff" stroke-width="1"/>
<rect x="1522.52" y="589.30" width="13.20" height="13.60" fill="#1f68a9" stroke="#fff" stroke-width="1"/>
<rect x="1547.83" y="595.90" width="13.20" height="20.10" fill="#84d1ee" stroke="#fff" stroke-width="1"/>
<rect x="1547.83" y="576.40" width="13.20" height="20.00" fill="#1f68a9" stroke="#fff" stroke-width="1"/>
<rect x="1573.14" y="599.80" width="13.20" height="16.20" fill="#84d1ee" stroke="#fff" stroke-width="1"/>
<rect x="1573.14" y="583.50" width="13.20" height="16.80" fill="#1f68a9" stroke="#fff" stroke-width="1"/>
<rect x="1598.45" y="606.70" width="13.20" height="9.30" fill="#84d1ee" stroke="#fff" stroke-width="1"/>
<rect x="1598.45" y="598.30" width="13.20" height="8.90" fill="#1f68a9" stroke="#fff" stroke-width="1"/>
<rect x="1623.76" y="605.70" width="13.20" height="10.30" fill="#84d1ee" stroke="#fff" stroke-width="1"/>
<rect x="1623.76" y="595.50" width="13.20" height="10.70" fill="#1f68a9" stroke="#fff" stroke-width="1"/>
<rect x="1649.07" y="604.70" width="13.20" height="11.30" fill="#84d1ee" stroke="#fff" stroke-width="1"/>
<rect x="1649.07" y="594.20" width="13.20" height="11.00" fill="#1f68a9" stroke="#fff" stroke-width="1"/>
<rect x="1674.38" y="601.60" width="13.20" height="14.40" fill="#84d1ee" stroke="#fff" stroke-width="1"/>
<rect x="1674.38" y="587.70" width="13.20" height="14.40" fill="#1f68a9" stroke="#fff" stroke-width="1"/>
<rect x="1699.69" y="599.50" width="13.20" height="16.50" fill="#84d1ee" stroke="#fff" stroke-width="1"/>
<rect x="1699.69" y="584.20" width="13.20" height="15.80" fill="#1f68a9" stroke="#fff" stroke-width="1"/>
<rect x="1725.00" y="576.00" width="13.20" height="40.00" fill="#84d1ee" stroke="#fff" stroke-width="1"/>
<rect x="1725.00" y="535.00" width="13.20" height="41.50" fill="#1f68a9" stroke="#fff" stroke-width="1"/>
<rect x="1750.31" y="597.90" width="13.20" height="18.10" fill="#84d1ee" stroke="#fff" stroke-width="1"/>
<rect x="1750.31" y="579.10" width="13.20" height="19.30" fill="#1f68a9" stroke="#fff" stroke-width="1"/>
<line x1="951.7" y1="616" x2="1777.4" y2="616" stroke="#cdcdcd" stroke-width="1"/>
<line x1="1206.4" y1="653.7" x2="1236.4" y2="653.7" stroke="#db9100" stroke-width="2"/>
<text x="1241.0" y="657.3" font-size="10" fill="#737373" text-anchor="start" font-weight="400" letter-spacing="0.2">Кол-во чеков</text>
<circle cx="1335.8" cy="653.3" r="5" fill="#1f68a9"/>
<text x="1355.0" y="657.3" font-size="10" fill="#737373" text-anchor="start" font-weight="400" letter-spacing="0.2">Сумма розн.</text>
<circle cx="1445.7" cy="653.3" r="5" fill="#84d1ee"/>
<text x="1465.5" y="657.3" font-size="10" fill="#737373" text-anchor="start" font-weight="400" letter-spacing="0.2">Сумма зак.</text>
</svg>
</body></html>
